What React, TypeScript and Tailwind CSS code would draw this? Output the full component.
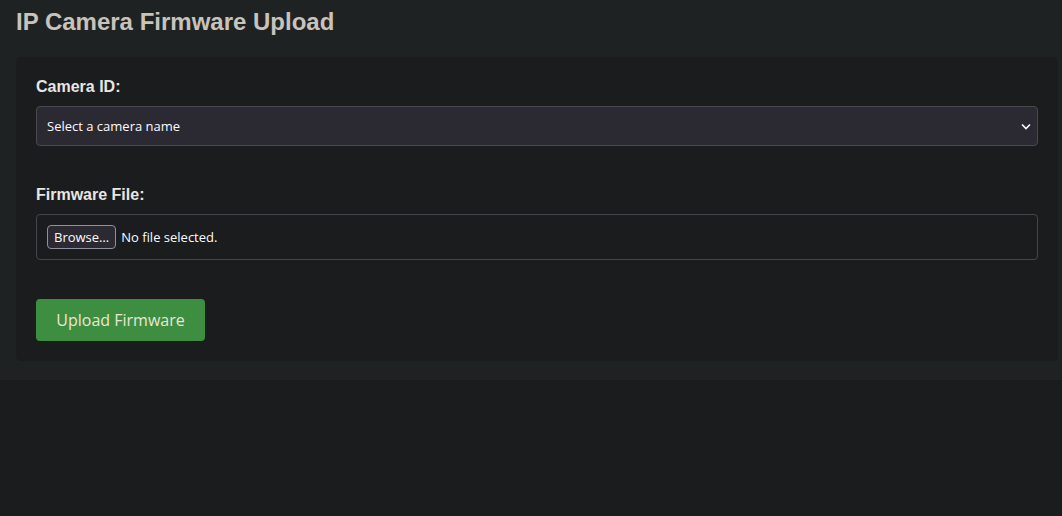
export default function App() {
  return (
    <div className="min-h-[516px] bg-[#1b1c1e]">
      <div className="bg-[#1f2223] px-4 pt-[7px] pb-[19px]">
        <h1 className="font-['Liberation_Sans',Arial,sans-serif] text-[24px] leading-[30px] font-bold text-[#c8c3bb] mb-[20px]">
          IP Camera Firmware Upload
        </h1>
        <div className="w-[1042px] bg-[#1b1c1e] rounded-[5px] px-5 pt-[20px] pb-[20px]">
          <label className="block font-['Liberation_Sans',Arial,sans-serif] text-[16px] leading-[20px] font-bold text-[#e8e6e3] mb-[9px]">
            Camera ID:
          </label>
          <div className="relative">
            <select className="w-full h-[40px] appearance-none bg-[#2b2a33] border border-[#4a4950] rounded-[4px] pl-[10px] pt-[2px] font-['Open_Sans',sans-serif] text-[13px] text-[#fbfbfe] outline-none">
              <option>Select a camera name</option>
            </select>
            <svg
              className="absolute right-[7px] top-[17px] pointer-events-none"
              width="10"
              height="7"
              viewBox="0 0 10 7"
              fill="none"
            >
              <path d="M1 1.5l4 4 4-4" stroke="#fbfbfe" strokeWidth="1.6" />
            </svg>
          </div>
          <label className="block font-['Liberation_Sans',Arial,sans-serif] text-[16px] leading-[20px] font-bold text-[#e8e6e3] mt-[39px] mb-[9px]">
            Firmware File:
          </label>
          <div className="h-[46px] border border-[#45464a] rounded-[4px] flex items-center pl-[10px] gap-[5px] font-['Open_Sans',sans-serif] text-[13px] text-[#fbfbfe]">
            <span className="h-[24px] px-[6px] pt-[1px] flex items-center bg-[#2b2a33] border border-[#8f8f9d] rounded-[4px]">
              Browse…
            </span>
            <span className="pt-[2px]">No file selected.</span>
          </div>
          <button className="mt-[39px] h-[42px] w-[169px] bg-[#3e8e41] rounded-[4px] font-['Open_Sans',sans-serif] text-[16px] text-[#e8e6d6]">
            Upload Firmware
          </button>
        </div>
      </div>
    </div>
  );
}
